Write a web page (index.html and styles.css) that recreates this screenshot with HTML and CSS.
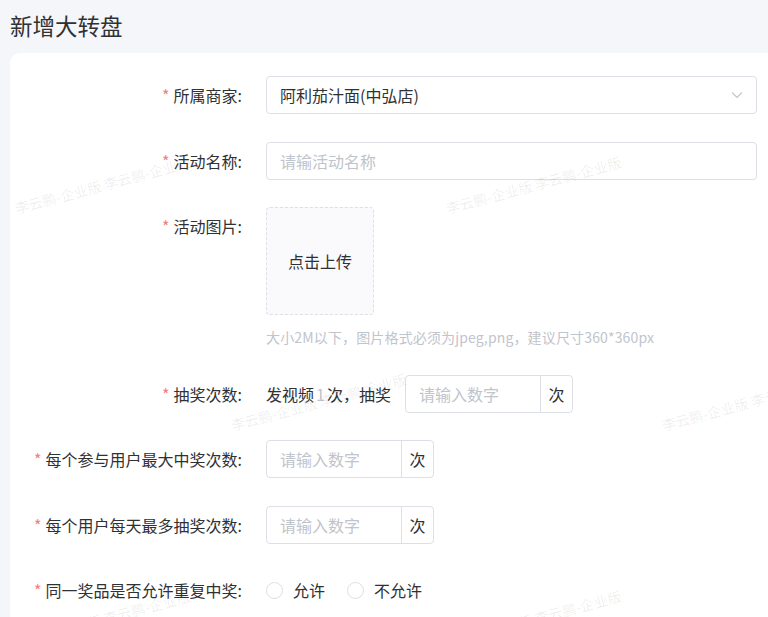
FILE: index.html
```html
<!DOCTYPE html>
<html lang="zh-CN">
<head>
<meta charset="utf-8">
<title>新增大转盘</title>
<link rel="stylesheet" href="styles.css">
</head>
<body>
<div class="page">
  <h1 class="title">新增大转盘</h1>
  <div class="card">
    <form class="form">
      <div class="row">
        <label class="label"><span class="req">*</span>所属商家:</label>
        <div class="control">
          <div class="select">
            <span class="select-value">阿利茄汁面(中弘店)</span>
            <svg class="arrow" width="12" height="8" viewBox="0 0 12 8"><path d="M1 1.5 L6 6.5 L11 1.5" fill="none" stroke="#c0c4cc" stroke-width="1.1"/></svg>
          </div>
        </div>
      </div>
      <div class="row">
        <label class="label"><span class="req">*</span>活动名称:</label>
        <div class="control">
          <div class="input full"><span class="ph">请输活动名称</span></div>
        </div>
      </div>
      <div class="row row-top">
        <label class="label"><span class="req">*</span>活动图片:</label>
        <div class="control col">
          <div class="upload">点击上传</div>
          <div class="hint">大小2M以下，图片格式必须为jpeg,png，建议尺寸360*360px</div>
        </div>
      </div>
      <div class="row">
        <label class="label"><span class="req">*</span>抽奖次数:</label>
        <div class="control">
          <span class="text">发视频<span class="num">1</span>次，抽奖</span>
          <div class="group">
            <div class="group-input"><span class="ph">请输入数字</span></div>
            <div class="append">次</div>
          </div>
        </div>
      </div>
      <div class="row">
        <label class="label"><span class="req">*</span>每个参与用户最大中奖次数:</label>
        <div class="control">
          <div class="group">
            <div class="group-input"><span class="ph">请输入数字</span></div>
            <div class="append">次</div>
          </div>
        </div>
      </div>
      <div class="row">
        <label class="label"><span class="req">*</span>每个用户每天最多抽奖次数:</label>
        <div class="control">
          <div class="group">
            <div class="group-input"><span class="ph">请输入数字</span></div>
            <div class="append">次</div>
          </div>
        </div>
      </div>
      <div class="row">
        <label class="label"><span class="req">*</span>同一奖品是否允许重复中奖:</label>
        <div class="control">
          <span class="radio"><span class="dot"></span>允许</span>
          <span class="radio"><span class="dot"></span>不允许</span>
        </div>
      </div>
    </form>
  </div>
  <div class="watermarks">
    <span class="wm wm-a">李云鹏-企业版 李云鹏-企业版</span>
    <span class="wm wm-b">李云鹏-企业版 李云鹏-企业版</span>
    <span class="wm wm-c">李云鹏-企业版 李云鹏-企业版</span>
    <span class="wm wm-d">李云鹏-企业版 李云鹏-企业版</span>
    <span class="wm wm-e">李云鹏-企业版 李云鹏-企业版</span>
    <span class="wm wm-f">李云鹏-企业版 李云鹏-企业版</span>
    <span class="wm wm-g">李云鹏-企业版 李云鹏-企业版</span>
  </div>
</div>
</body>
</html>
```

FILE: styles.css
```css
* { box-sizing: border-box; }
html, body { margin: 0; padding: 0; }
body {
  background: #f5f6fa;
  font-family: "Noto Sans CJK SC", "Noto Sans", sans-serif;
  color: #303133;
  overflow: hidden;
}
.page {
  position: relative;
  height: 617px;
  padding-left: 10px;
}
.title {
  margin: 0;
  height: 53px;
  padding-top: 8px;
  font-size: 22.5px;
  line-height: 34px;
  font-weight: normal;
  color: #303133;
}
.card {
  background: #fff;
  border-radius: 10px 0 0 0;
  height: 564px;
  padding: 23px 11px 0 0;
}
.form {
  display: flex;
  flex-direction: column;
  gap: 27.5px;
}
.row {
  display: flex;
  align-items: center;
  gap: 24px;
  font-size: 16px;
}
.row-top { align-items: flex-start; }
.label {
  width: 232px;
  flex: none;
  text-align: right;
  line-height: 38px;
  color: #303133;
  white-space: nowrap;
}
.req {
  color: #f37c7c;
  margin-right: 4px;
}
.control {
  flex: 1;
  display: flex;
  align-items: center;
  min-height: 38px;
}
.control.col {
  flex-direction: column;
  align-items: flex-start;
}
.select, .input {
  flex: 1;
  height: 38px;
  border: 1px solid #dcdfe6;
  border-radius: 4px;
  display: flex;
  align-items: center;
  padding: 0 14px 0 13px;
}
.select-value { flex: 1; color: #303133; }
.arrow { margin-right: -1px; }
.ph { color: #c0c4cc; }
.upload {
  width: 108px;
  height: 108px;
  border: 1px dashed #dcdfe6;
  border-radius: 4px;
  background: #fafafc;
  display: flex;
  align-items: center;
  justify-content: center;
  color: #303133;
}
.hint {
  margin-top: 12px;
  font-size: 14px;
  letter-spacing: 0.15px;
  line-height: 20px;
  color: #c0c4cc;
}
.text { margin-right: 14px; color: #303133; }
.num { color: #c0c4cc; margin: 0 2px; }
.group {
  display: flex;
  height: 38px;
  border: 1px solid #dcdfe6;
  border-radius: 4px;
}
.group-input {
  width: 135px;
  display: flex;
  align-items: center;
  padding-left: 13px;
  border-right: 1px solid #dcdfe6;
}
.append {
  width: 31px;
  display: flex;
  align-items: center;
  justify-content: center;
  color: #303133;
}
.radio {
  display: inline-flex;
  align-items: center;
  margin-right: 22px;
  color: #303133;
}
.dot {
  width: 17px;
  height: 17px;
  border: 1px solid #dcdfe6;
  border-radius: 50%;
  margin-right: 10px;
  background: #fff;
}
.watermarks {
  position: absolute;
  inset: 0;
  pointer-events: none;
  overflow: hidden;
}
.wm {
  position: absolute;
  font-size: 14px;
  line-height: 14px;
  white-space: nowrap;
  color: rgba(0, 0, 0, 0.08);
  transform: rotate(-15deg);
  transform-origin: 0 100%;
}
.wm-a { left: 17px; top: 201px; }
.wm-b { left: 448px; top: 201px; }
.wm-c { left: 233px; top: 418px; }
.wm-d { left: 664px; top: 418px; }
.wm-e { left: -198px; top: 418px; }
.wm-f { left: 17px; top: 635px; }
.wm-g { left: 448px; top: 635px; }
```
